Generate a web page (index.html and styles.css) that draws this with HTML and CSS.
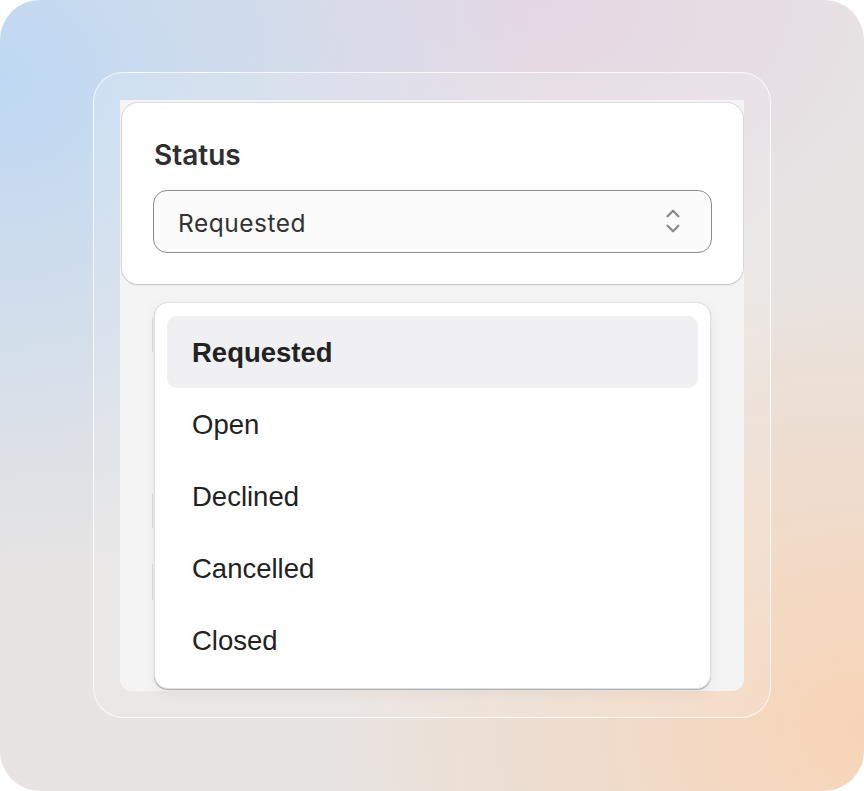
FILE: index.html
```html
<!DOCTYPE html>
<html lang="en">
<head>
<meta charset="utf-8">
<title>Status select</title>
<link rel="stylesheet" href="styles.css">
</head>
<body>
<div class="stage">
  <div class="frame">
    <div class="panel">
      <div class="card">
        <div class="label">Status</div>
        <div class="select">
          <span class="select-value">Requested</span>
          <svg class="chevrons" width="14" height="26" viewBox="0 0 14 26" aria-hidden="true">
            <path d="M1.6 8.2 L7 2.8 L12.4 8.2" />
            <path d="M1.6 17.8 L7 23.2 L12.4 17.8" />
          </svg>
        </div>
      </div>
      <div class="behind">
        <div class="ghost g1"></div>
        <div class="ghost g2"></div>
        <div class="ghost g3"></div>
      </div>
      <ul class="menu">
        <li class="item selected">Requested</li>
        <li class="item">Open</li>
        <li class="item">Declined</li>
        <li class="item">Cancelled</li>
        <li class="item">Closed</li>
      </ul>
    </div>
  </div>
</div>
</body>
</html>
```

FILE: styles.css
```css
html, body {
  margin: 0;
  padding: 0;
  background: #ffffff;
}

.stage {
  width: 864px;
  height: 791px;
  border-radius: 40px;
  box-sizing: border-box;
  padding: 72px 93px 73px 93px;
  background:
    radial-gradient(ellipse 540px 500px at 0% 10%, rgba(190, 216, 243, 1) 0%, rgba(190, 216, 243, 0) 100%),
    radial-gradient(ellipse 560px 480px at 100% 92%, rgba(248, 212, 182, 1) 0%, rgba(248, 212, 182, 0) 100%),
    radial-gradient(ellipse 420px 300px at 62% 0%, rgba(229, 214, 228, 1) 0%, rgba(229, 214, 228, 0) 100%),
    #e7e4e3;
  overflow: hidden;
}

.frame {
  height: 100%;
  box-sizing: border-box;
  border: 1.5px solid rgba(255, 255, 255, 0.75);
  border-radius: 30px;
  background: rgba(255, 255, 255, 0.14);
  padding: 26.5px 26px 26.5px 26px;
}

.panel {
  position: relative;
  height: 100%;
  background: #f4f4f4;
  border-radius: 0 0 12px 12px;
  padding: 3px 1px 0 2px;
  box-sizing: border-box;
}

.card {
  background: #ffffff;
  border-radius: 16px;
  box-shadow: 0 0 0 1px rgba(0, 0, 0, 0.09), 0 1px 2px rgba(0, 0, 0, 0.12);
  padding: 37px 31px 31px 31px;
  font-family: Inter, "Noto Sans", sans-serif;
}

.label {
  font-size: 28px;
  font-weight: 600;
  color: #2e2e2e;
  line-height: 30px;
  margin-bottom: 20px;
  padding-left: 1px;
}

.select {
  height: 63px;
  box-sizing: border-box;
  border: 1px solid #8c8c8c;
  border-radius: 14px;
  background: #fbfbfb;
  display: flex;
  align-items: center;
  justify-content: space-between;
  padding: 0 31px 0 24px;
}

.select-value {
  font-size: 24.5px;
  color: #333333;
  letter-spacing: 0.5px;
  padding-top: 3px;
}

.chevrons path {
  fill: none;
  stroke: #8a8a8a;
  stroke-width: 2.3;
  stroke-linecap: round;
  stroke-linejoin: round;
}

.behind {
  padding-left: 30px;
  padding-top: 33px;
  display: flex;
  flex-direction: column;
}

.ghost {
  width: 20px;
  border-left: 1px solid #dcdcdc;
}

.g1 { height: 35px; margin-bottom: 142px; }
.g2 { height: 34px; margin-bottom: 36px; }
.g3 { height: 36px; }

.menu {
  position: absolute;
  top: 202px;
  left: 34px;
  width: 557px;
  height: 387px;
  box-sizing: border-box;
  margin: 0;
  padding: 13px 12px 12px 12px;
  list-style: none;
  background: #ffffff;
  border: 1px solid #e0e0e0;
  border-radius: 14px;
  box-shadow: 0 1px 1px rgba(0, 0, 0, 0.28), 0 4px 14px rgba(0, 0, 0, 0.05);
  font-family: "Liberation Sans", Arial, sans-serif;
}

.item {
  height: 72px;
  box-sizing: border-box;
  display: flex;
  align-items: center;
  padding: 2px 0 0 25px;
  border-radius: 10px;
  font-size: 27.5px;
  color: #222222;
}

.item.selected {
  background: #f0f0f2;
  font-weight: 700;
}
```
